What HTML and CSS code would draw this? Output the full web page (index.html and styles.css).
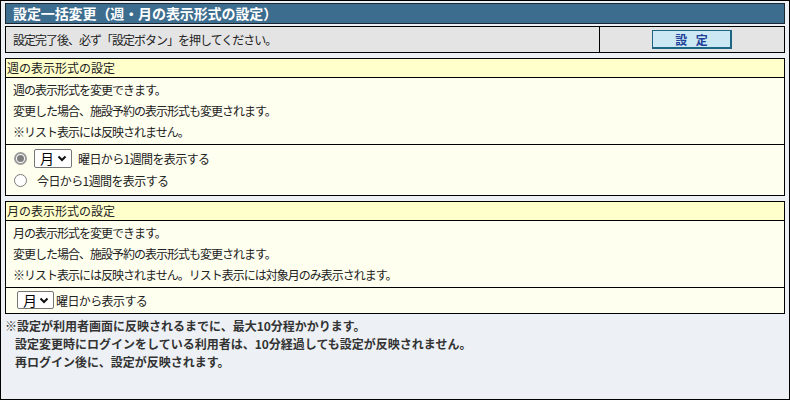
FILE: index.html
```html
<!DOCTYPE html>
<html lang="ja">
<head>
    <meta charset="UTF-8">
    <title>設定一括変更</title>
    <link rel="stylesheet" href="styles.css">
</head>
<body>
    <div class="page">
        <div class="title">設定一括変更（週・月の表示形式の設定）</div>

        <div class="info">
            <div class="info-msg">設定完了後、必ず「設定ボタン」を押してください。</div>
            <div class="info-btn"><button class="btn" type="button">設 定</button></div>
        </div>

        <!-- 週 -->
        <div class="sec">
            <div class="sec-head">週の表示形式の設定</div>
            <div class="sec-desc">
                <p>週の表示形式を変更できます。</p>
                <p>変更した場合、施設予約の表示形式も変更されます。</p>
                <p>※リスト表示には反映されません。</p>
            </div>
            <div class="sec-opts">
                <div class="row">
                    <span class="radio checked"></span>
                    <span class="select"><span>月</span><svg width="10" height="7" viewBox="0 0 10 7"><path d="M1.5 1.5 L5 5 L8.5 1.5" fill="none" stroke="#111" stroke-width="2"/></svg></span>
                    <span class="row-text">曜日から1週間を表示する</span>
                </div>
                <div class="row">
                    <span class="radio"></span>
                    <span class="row-text wide">今日から1週間を表示する</span>
                </div>
            </div>
        </div>

        <!-- 月 -->
        <div class="sec">
            <div class="sec-head">月の表示形式の設定</div>
            <div class="sec-desc">
                <p>月の表示形式を変更できます。</p>
                <p>変更した場合、施設予約の表示形式も変更されます。</p>
                <p>※リスト表示には反映されません。リスト表示には対象月のみ表示されます。</p>
            </div>
            <div class="sec-opts month">
                <div class="row">
                    <span class="select"><span>月</span><svg width="10" height="7" viewBox="0 0 10 7"><path d="M1.5 1.5 L5 5 L8.5 1.5" fill="none" stroke="#111" stroke-width="2"/></svg></span>
                    <span class="row-text tight">曜日から表示する</span>
                </div>
            </div>
        </div>

        <div class="notes">
            <p>※設定が利用者画面に反映されるまでに、最大10分程かかります。</p>
            <p class="indent">設定変更時にログインをしている利用者は、10分経過しても設定が反映されません。</p>
            <p class="indent">再ログイン後に、設定が反映されます。</p>
        </div>
    </div>
</body>
</html>
```

FILE: styles.css
```css
* {
    margin: 0;
    padding: 0;
    box-sizing: border-box;
}
body {
    font-family: "Noto Sans CJK JP", "Noto Sans", sans-serif;
    font-size: 12px;
    color: #222;
}
.page {
    width: 790px;
    height: 400px;
    border: 1px solid #000;
    background-color: #edf1f5;
    padding: 2px 4px 0;
}
.title {
    height: 21px;
    line-height: 19px;
    border: 1px solid #1a2833;
    background-color: #3d6d8e;
    color: #fff;
    font-size: 14px;
    font-weight: bold;
    padding-left: 7px;
    letter-spacing: -0.1px;
}
.info {
    display: flex;
    margin-top: 2px;
    height: 27px;
    border: 1px solid #000;
    background-color: #e4e4e4;
}
.info-msg {
    width: 593px;
    line-height: 25px;
    padding-left: 7px;
    letter-spacing: -1px;
}
.info-btn {
    flex: 1;
    display: flex;
    align-items: center;
    justify-content: center;
    border-left: 1px solid #000;
}
.btn {
    width: 80px;
    height: 19px;
    border: 1px solid #1d6683;
    border-bottom-width: 2px;
    border-right-width: 2px;
    background-color: #cce8f4;
    color: #1f3f98;
    font-family: inherit;
    font-size: 12px;
    font-weight: bold;
    line-height: 15px;
    letter-spacing: 3px;
    padding-left: 3px;
}
.sec {
    margin-top: 5px;
    border: 1px solid #000;
    background-color: #fffff0;
}
.sec-head {
    height: 19px;
    line-height: 18px;
    background-color: #ffffcc;
    border-bottom: 1px solid #000;
    padding-left: 1px;
}
.sec-desc {
    padding: 1px 7px 2px;
    letter-spacing: -1px;
}
.sec-desc p {
    line-height: 21px;
}
.sec-opts {
    border-top: 1px solid #000;
    padding: 2px 8px 4px;
}
.sec-opts.month {
    padding: 1px 11px 2px;
}
.row {
    display: flex;
    align-items: center;
    height: 22px;
}
.radio {
    width: 13px;
    height: 13px;
    border: 1px solid #7a7a7a;
    border-radius: 50%;
    background-color: #fff;
    margin-right: 7px;
    position: relative;
}
.radio.checked {
    border: 2px solid #9a9a9a;
}
.radio.checked::after {
    content: "";
    position: absolute;
    left: 1px;
    top: 1px;
    width: 7px;
    height: 7px;
    border-radius: 50%;
    background-color: #7d7d7d;
}
.select {
    display: inline-flex;
    align-items: center;
    justify-content: space-between;
    width: 38px;
    height: 19px;
    border: 1px solid #767676;
    border-radius: 2px;
    background-color: #fff;
    padding: 0 4px 0 5px;
    font-size: 14px;
    color: #000;
}
.month .select {
    width: 37px;
    height: 18px;
}
.row-text {
    margin-left: 6px;
    letter-spacing: -0.6px;
}
.row-text.wide {
    margin-left: 3px;
}
.row-text.tight {
    margin-left: 2px;
}
.notes {
    margin-top: 3px;
    font-weight: bold;
    color: #333;
}
.notes p {
    line-height: 18px;
}
.notes .indent {
    padding-left: 10px;
}
```
